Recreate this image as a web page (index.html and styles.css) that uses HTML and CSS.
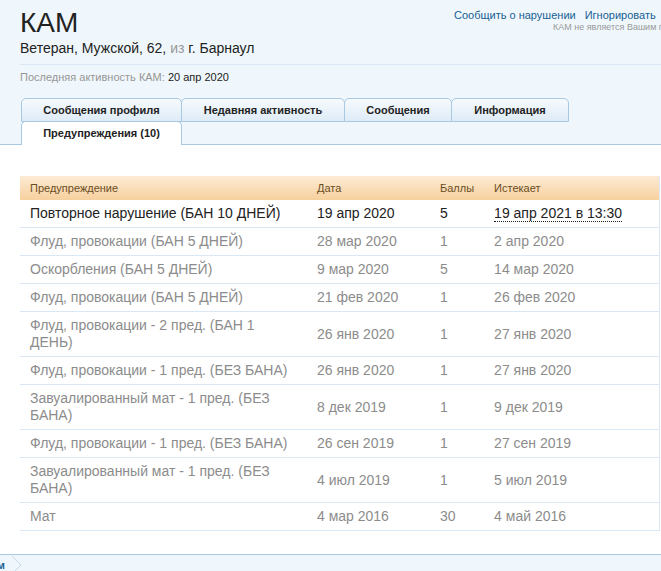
FILE: index.html
```html
<!DOCTYPE html>
<html>
<head>
<meta charset="utf-8">
<title>КАМ</title>
<link rel="stylesheet" href="styles.css">
</head>
<body>
<div class="profile-head">
	<div class="head-top">
		<div class="who">
			<h1>КАМ</h1>
			<p class="info">Ветеран, Мужской, 62, <span class="muted">из</span> г. Барнаул</p>
		</div>
		<div class="actions">
			<div class="links"><a href="#">Сообщить о нарушении</a><a href="#">Игнорировать</a></div>
			<div class="note">КАМ не является Вашим подписчиком</div>
		</div>
	</div>
	<p class="last-seen">Последняя активность КАМ: <b>20 апр 2020</b></p>
	<ul class="tabs">
		<li>Сообщения профиля</li>
		<li>Недавняя активность</li>
		<li>Сообщения</li>
		<li>Информация</li>
	</ul>
	<ul class="tabs tabs-low">
		<li class="active">Предупреждения (10)</li>
	</ul>
</div>
<div class="content">
	<table class="warnings">
		<tr><th class="c1">Предупреждение</th><th class="c2">Дата</th><th class="c3">Баллы</th><th>Истекает</th></tr>
		<tr class="current"><td>Повторное нарушение (БАН 10 ДНЕЙ)</td><td>19 апр 2020</td><td>5</td><td><abbr>19 апр 2021 в 13:30</abbr></td></tr>
		<tr><td>Флуд, провокации (БАН 5 ДНЕЙ)</td><td>28 мар 2020</td><td>1</td><td>2 апр 2020</td></tr>
		<tr><td>Оскорбления (БАН 5 ДНЕЙ)</td><td>9 мар 2020</td><td>5</td><td>14 мар 2020</td></tr>
		<tr><td>Флуд, провокации (БАН 5 ДНЕЙ)</td><td>21 фев 2020</td><td>1</td><td>26 фев 2020</td></tr>
		<tr><td>Флуд, провокации - 2 пред. (БАН 1 ДЕНЬ)</td><td>26 янв 2020</td><td>1</td><td>27 янв 2020</td></tr>
		<tr><td>Флуд, провокации - 1 пред. (БЕЗ БАНА)</td><td>26 янв 2020</td><td>1</td><td>27 янв 2020</td></tr>
		<tr><td>Завуалированный мат - 1 пред. (БЕЗ БАНА)</td><td>8 дек 2019</td><td>1</td><td>9 дек 2019</td></tr>
		<tr><td>Флуд, провокации - 1 пред. (БЕЗ БАНА)</td><td>26 сен 2019</td><td>1</td><td>27 сен 2019</td></tr>
		<tr><td>Завуалированный мат - 1 пред. (БЕЗ БАНА)</td><td>4 июл 2019</td><td>1</td><td>5 июл 2019</td></tr>
		<tr><td>Мат</td><td>4 мар 2016</td><td>30</td><td>4 май 2016</td></tr>
	</table>
</div>
<div class="crumbs">
	<span class="crumb">Форум</span>
	<svg class="arrow" width="14" height="18" viewBox="0 0 14 18"><path d="M1 0 L10 9 L1 18" fill="none" stroke="#c5d9ea" stroke-width="1"/></svg>
</div>
</body>
</html>
```
FILE: styles.css
```css
*{
	margin: 0;
	padding: 0;
}
body{
	background: #f0f7fc;
	font-family: "Liberation Sans", Arial, sans-serif;
	color: #222;
	overflow: hidden;
	width: 661px;
}
.profile-head{
	padding-top: 9px;
	padding-left: 20px;
}
.head-top{
	display: flex;
	justify-content: space-between;
	border-bottom: 1px solid #d9e8f4;
	padding-bottom: 8px;
}
h1{
	font-size: 28px;
	font-weight: normal;
	line-height: 28px;
	color: #222;
}
.info{
	font-size: 14px;
	margin-top: 3px;
	color: #222;
}
.muted{
	color: #969696;
}
.actions{
	width: 207px;
	margin-top: -4px;
	white-space: nowrap;
}
.links a{
	font-size: 11px;
	color: #176093;
	text-decoration: none;
	margin-right: 9px;
}
.note{
	font-size: 9px;
	color: #999;
	padding-left: 99px;
	margin-top: -1px;
}
.last-seen{
	font-size: 11px;
	color: #969696;
	margin-top: 6px;
}
.last-seen b{
	color: #222;
	font-weight: normal;
}
.tabs{
	list-style: none;
	display: flex;
	margin-top: 15px;
	padding-left: 1px;
}
.tabs li{
	font-size: 11px;
	font-weight: bold;
	color: #222;
	height: 22px;
	line-height: 22px;
	text-align: center;
	border: 1px solid #a9c9e2;
	border-radius: 5px 5px 0 0;
	background: linear-gradient(#f6fafd, #deebf6);
	margin-right: -1px;
}
.tabs li:nth-child(1){ width: 159px; }
.tabs li:nth-child(2){ width: 162px; }
.tabs li:nth-child(3){ width: 106px; }
.tabs li:nth-child(4){ width: 116px; }
.tabs-low{
	margin-top: 0;
	margin-left: -20px;
	padding-left: 21px;
	border-bottom: 1px solid #a9c9e2;
}
.tabs-low li.active{
	width: 159px;
	height: 23px;
	line-height: 23px;
	background: #fff;
	border-bottom: none;
	margin-top: -1px;
	margin-bottom: -1px;
}
.content{
	background: #fff;
	height: 410px;
	padding-top: 31px;
	padding-left: 20px;
	box-sizing: border-box;
	border-bottom: 1px solid #a9c9e2;
}
.warnings{
	border-collapse: collapse;
	width: 640px;
	border-right: 1px solid #d9e8f4;
}
.warnings th{
	background: linear-gradient(#fcebd4, #f7d09e);
	font-size: 11px;
	font-weight: normal;
	color: #6b4d22;
	text-align: left;
	height: 24px;
	padding: 0 10px;
}
.warnings th.c1{ width: 267px; }
.warnings th.c2{ width: 103px; }
.warnings th.c3{ width: 34px; }
.warnings td{
	font-size: 14px;
	line-height: 17px;
	color: #8c8c8c;
	padding: 5px 10px;
	border-bottom: 1px solid #d9e8f4;
	vertical-align: middle;
}
.warnings tr.current td{
	color: #222;
}
abbr{
	text-decoration: none;
	border-bottom: 1px dotted #222;
}
.crumbs{
	height: 20px;
	display: flex;
	align-items: center;
}
.crumb{
	font-size: 11px;
	font-weight: bold;
	color: #176093;
	margin-left: -32px;
}
.arrow{
	margin-left: 6px;
}
```
